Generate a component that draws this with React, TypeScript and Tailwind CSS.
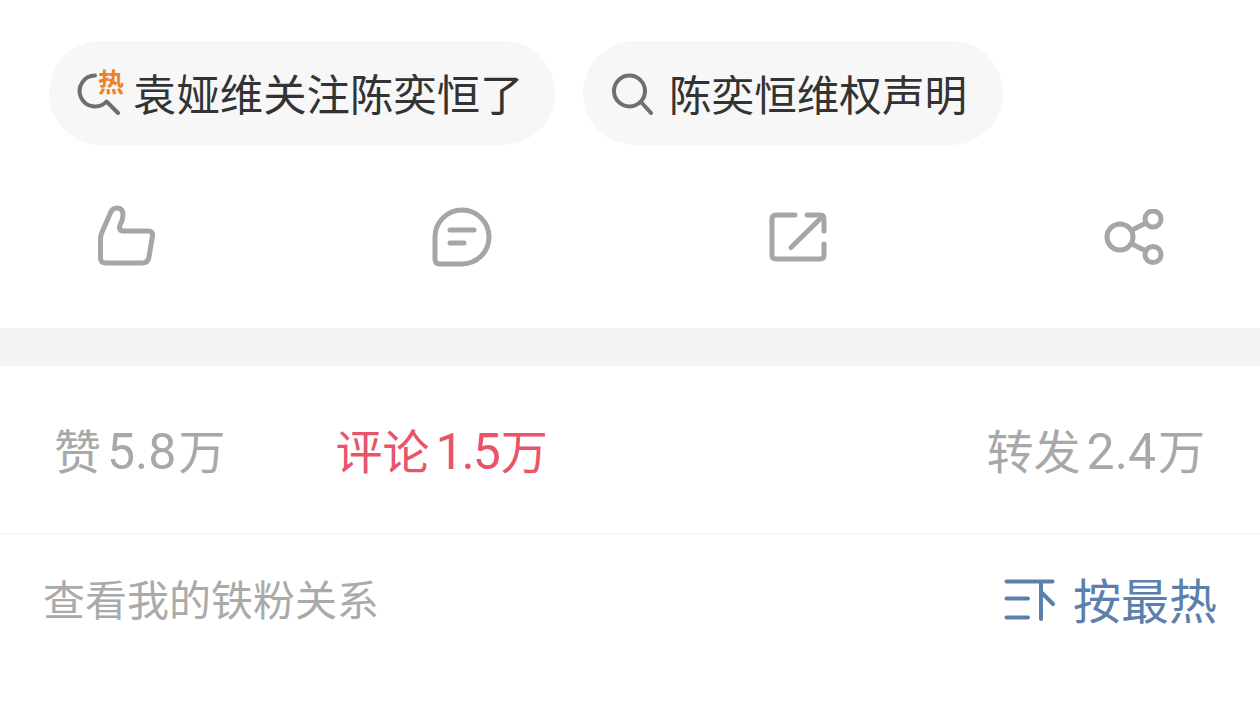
const font = "font-['Noto_Sans_CJK_SC','Noto_Sans',sans-serif]";

function SearchIcon({ hot }: { hot?: boolean }) {
  if (hot) {
    return (
      <div className="relative h-[44px] w-[48px] shrink-0">
        <svg width="48" height="44" viewBox="0 0 48 44" fill="none" stroke="#6f6f6f" strokeWidth="4" strokeLinecap="round">
          <path d="M18 4.5 A15.5 15.5 0 1 0 29.5 30.5" />
          <path d="M30 31 L41 42" />
        </svg>
        <span className="absolute left-[21px] top-[-5px] text-[26px] font-bold leading-[30px] text-[#f0812b]">热</span>
      </div>
    );
  }
  return (
    <svg width="44" height="44" viewBox="0 0 44 44" fill="none" stroke="#6f6f6f" strokeWidth="4" strokeLinecap="round" className="shrink-0">
      <circle cx="18.5" cy="20" r="15.5" />
      <path d="M30 31 L40 42" />
    </svg>
  );
}

function Pill({ text, hot, className, textClass }: { text: string; hot?: boolean; className: string; textClass: string }) {
  return (
    <div className={`flex h-[104px] items-center rounded-full bg-[#f7f7f7] ${className}`}>
      <SearchIcon hot={hot} />
      <span className={`leading-none text-[#333333] ${textClass}`}>{text}</span>
    </div>
  );
}

function ActionIcons() {
  const stroke = { fill: "none", stroke: "#a6a6a6", strokeWidth: 5, strokeLinecap: "round" as const, strokeLinejoin: "round" as const };
  return (
    <div className="flex h-[183px] items-center justify-between px-[96px]">
      <svg width="60" height="64" viewBox="0 0 60 64" {...stroke}>
        <path d="M4.5 34 Q4.5 30 6.5 26 L14 9 Q16 3 21 3 Q27 3 27 10 Q27 15 24 20 Q22 26 28 26 L52 26 Q57 26 56.5 31 L53 52 Q52 58 46 58 L10 58 Q4.5 58 4.5 53 Z" />
      </svg>
      <svg width="60" height="60" viewBox="0 0 60 60" {...stroke}>
        <path d="M3 30 A27 27 0 1 1 30 57 L8 57 Q3 57 3 52 Z" />
        <path d="M18 23 L42 23" />
        <path d="M18 36 L32 36" />
      </svg>
      <svg width="60" height="52" viewBox="0 0 60 52" {...stroke}>
        <path d="M27 4 L8 4 Q4 4 4 8 L4 44 Q4 48 8 48 L52 48 Q56 48 56 44 L56 33" />
        <path d="M39 4 L52 4 Q56 4 56 8 L56 20" />
        <path d="M23 36.5 L55 5" />
      </svg>
      <svg width="60" height="56" viewBox="0 0 60 56" {...stroke}>
        <circle cx="16" cy="28" r="13" />
        <circle cx="49" cy="10" r="8" />
        <circle cx="49" cy="45.5" r="8" />
        <path d="M28 21 L42 14" />
        <path d="M28 35 L42 42" />
      </svg>
    </div>
  );
}

function SortIcon() {
  return (
    <svg width="52" height="44" viewBox="0 0 52 44" fill="none" stroke="#5b80ab" strokeWidth="4" strokeLinecap="round" strokeLinejoin="round" className="mt-[3px]">
      <path d="M3.5 3.5 L49.5 3.5" />
      <path d="M3.5 20.5 L25 20.5" />
      <path d="M3.5 39.5 L25 39.5" />
      <path d="M38 4 L38 41" />
      <path d="M38 14 L50 26" />
    </svg>
  );
}

function Stat({ label, value, className, valueClass }: { label: string; value: string; className: string; valueClass?: string }) {
  return (
    <span className={`whitespace-nowrap ${className}`}>
      {label}
      <span className={`ml-[6px] mr-[2px] font-['Roboto',sans-serif] text-[50px] leading-none ${valueClass ?? ""}`}>{value}</span>万
    </span>
  );
}

export default function App() {
  return (
    <div className={`h-[708px] w-[1260px] overflow-hidden bg-white ${font}`}>
      <div className="flex gap-[28px] pl-[49px] pt-[41px]">
        <Pill text="袁娅维关注陈奕恒了" hot className="w-[506px] gap-[8px] pl-[28px]" textClass="text-[43.4px]" />
        <Pill text="陈奕恒维权声明" className="w-[420px] gap-[14px] pl-[28px]" textClass="text-[42.6px]" />
      </div>

      <ActionIcons />

      <div className="h-[38px] bg-[#f3f3f3]" />

      <div className="flex h-[168px] items-center justify-between border-b border-[#f2f2f2] pl-[54px] pr-[55px] pt-[3px] text-[47px] leading-none">
        <div className="flex gap-[110px]">
          <Stat label="赞" value="5.8" className="text-[#a8a8a8]" />
          <Stat label="评论" value="1.5" className="text-[#e9546b]" valueClass="tracking-[-2px]" />
        </div>
        <Stat label="转发" value="2.4" className="text-[#a8a8a8]" />
      </div>

      <div className="flex h-[133px] items-center justify-between pb-[5px] pl-[43px] pr-[43px]">
        <span className="text-[42px] leading-none text-[#aaaaaa]">查看我的铁粉关系</span>
        <div className="flex items-center gap-[18px]">
          <SortIcon />
          <span className="text-[48px] leading-none text-[#5b80ab]">按最热</span>
        </div>
      </div>
    </div>
  );
}
